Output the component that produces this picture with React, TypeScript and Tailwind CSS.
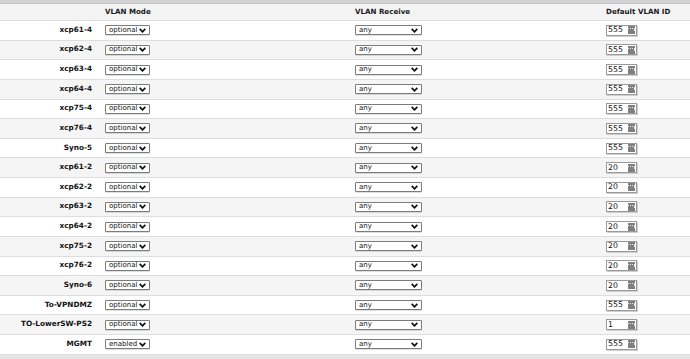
import React from 'react';

type Port = { name: string; mode: string; id: string };

const ports: Port[] = [
  { name: 'xcp61-4', mode: 'optional', id: '555' },
  { name: 'xcp62-4', mode: 'optional', id: '555' },
  { name: 'xcp63-4', mode: 'optional', id: '555' },
  { name: 'xcp64-4', mode: 'optional', id: '555' },
  { name: 'xcp75-4', mode: 'optional', id: '555' },
  { name: 'xcp76-4', mode: 'optional', id: '555' },
  { name: 'Syno-5', mode: 'optional', id: '555' },
  { name: 'xcp61-2', mode: 'optional', id: '20' },
  { name: 'xcp62-2', mode: 'optional', id: '20' },
  { name: 'xcp63-2', mode: 'optional', id: '20' },
  { name: 'xcp64-2', mode: 'optional', id: '20' },
  { name: 'xcp75-2', mode: 'optional', id: '20' },
  { name: 'xcp76-2', mode: 'optional', id: '20' },
  { name: 'Syno-6', mode: 'optional', id: '20' },
  { name: 'To-VPNDMZ', mode: 'optional', id: '555' },
  { name: 'TO-LowerSW-PS2', mode: 'optional', id: '1' },
  { name: 'MGMT', mode: 'enabled', id: '555' },
];

const Chevron = () => (
  <svg width="7" height="5" viewBox="0 0 7 5" className="shrink-0">
    <path d="M0.7 0.8 L3.5 3.8 L6.3 0.8" fill="none" stroke="#111" strokeWidth="1.7" />
  </svg>
);

const FakeSelect = ({ value, width }: { value: string; width: string }) => (
  <div
    className={`${width} h-[10px] flex items-center justify-between pl-[3px] pr-[3px] bg-white border border-[#7c7c7c] rounded-[1px] shadow-[0_0.5px_0.5px_rgba(0,0,0,0.25)]`}
  >
    <span className="text-[7px] leading-none text-[#111]">{value}</span>
    <Chevron />
  </div>
);

const NumberBox = ({ value }: { value: string }) => (
  <div className="w-[31px] h-[11px] flex items-center justify-between bg-white border border-[#999] shadow-[1px_1px_0_#cfcfcf] pl-[1px] pr-[1px]">
    <span className="text-[7.8px] leading-none text-[#111]">{value}</span>
    <div className="w-[7px] h-[8px] bg-[#7f7f7f] flex items-start justify-center pt-[2px]">
      <div className="flex items-start gap-[1px]">
        <div className="w-[1px] h-[1px] bg-[#e8e8e8]" />
        <div className="w-[1px] h-[1px] bg-[#e8e8e8]" />
        <div className="w-[1px] h-[1px] bg-[#e8e8e8]" />
        <div className="w-[1px] h-[3px] bg-[#e8e8e8]" />
      </div>
    </div>
  </div>
);

export default function App() {
  return (
    <div
      className="w-[690px] h-[359px] bg-[#e4e4e4] overflow-hidden"
      style={{ fontFamily: '"DejaVu Sans", Verdana, sans-serif' }}
    >
      <div className="h-[4px] bg-[#d2d2d2] border-b border-[#c4c4c4]" />
      <div className="grid grid-cols-[105px_250px_251px_1fr] h-[17px] items-center bg-[#f3f3f3] border-b border-[#dcdcdc] text-[7.1px] font-bold text-[#1a1a1a]">
        <div />
        <div>VLAN Mode</div>
        <div>VLAN Receive</div>
        <div>Default VLAN ID</div>
      </div>
      {ports.map((p, i) => (
        <div
          key={p.name}
          className={`grid grid-cols-[105px_250px_251px_1fr] h-[19.625px] items-center border-b border-[#dedede] ${
            i % 2 === 0 ? 'bg-white' : 'bg-[#f5f5f5]'
          }`}
        >
          <div className="text-right pr-[13px] text-[7.3px] font-bold text-[#111] whitespace-nowrap">{p.name}</div>
          <div>
            <FakeSelect value={p.mode} width="w-[45px]" />
          </div>
          <div>
            <FakeSelect value="any" width="w-[67px]" />
          </div>
          <div>
            <NumberBox value={p.id} />
          </div>
        </div>
      ))}
    </div>
  );
}
